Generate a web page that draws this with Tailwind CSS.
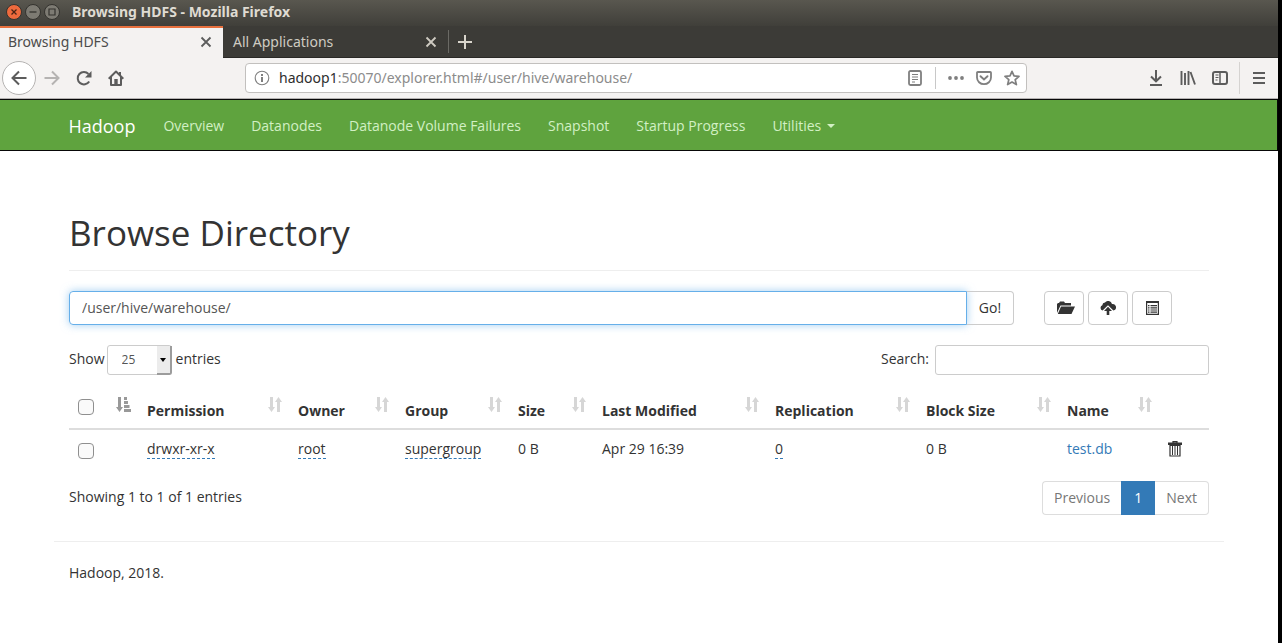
<!DOCTYPE html>
<html lang="en">

<head>
    <meta charset="UTF-8">
    <meta name="viewport" content="width=device-width, initial-scale=1.0">
    <title>Browsing HDFS</title>
    <script src="https://cdn.jsdelivr.net/npm/@tailwindcss/browser@4"></script>
</head>

<body class="min-h-screen bg-black pr-1 flex flex-col font-['Open_Sans','Noto_Sans',sans-serif] text-sm leading-5 text-[#333333]">
    <!-- shared icons -->
    <svg class="hidden">
        <symbol id="sort" viewBox="0 0 14 15">
            <path d="M2 0h3v10h2l-3.500 5L0 10h2zM9 15h3V5h2l-3.500-5L7 5h2z" fill="currentColor" />
        </symbol>
    </svg>

    <!-- window title -->
    <header class="h-[26px] pb-[2px] bg-gradient-to-b from-[#59574f] to-[#403f3a] flex items-center pl-[6px] text-[#dfdbd2]">
        <button aria-label="Close window" class="mr-[3px]"><svg class="size-4" viewBox="0 0 16 16"><circle cx="8" cy="8" r="7.500" fill="#ee6a3d" stroke="#34332f" /><path d="M5.500 5.500l5 5m0-5l-5 5" stroke="#4a2415" stroke-width="1.300" /></svg></button>
        <button aria-label="Minimize window" class="mr-[3px]"><svg class="size-4" viewBox="0 0 16 16"><circle cx="8" cy="8" r="7.500" fill="#7d7b73" stroke="#34332f" /><path d="M4.500 8h7" stroke="#34332f" stroke-width="1.300" /></svg></button>
        <button aria-label="Maximize window" class="mr-3"><svg class="size-4" viewBox="0 0 16 16"><circle cx="8" cy="8" r="7.500" fill="#7d7b73" stroke="#34332f" /><path d="M5 5h6v6H5z" fill="none" stroke="#34332f" stroke-width="1.200" /></svg></button>
        <span class="font-['Noto_Sans',sans-serif] text-sm font-bold">Browsing HDFS - Mozilla Firefox</span>
    </header>

    <!-- tabs -->
    <div class="h-8 bg-[#3c3b37] flex items-stretch border-b border-[#2a2926] font-['Noto_Sans',sans-serif] text-sm">
        <div class="w-[223px] -mb-px pb-[2px] bg-[#f4f2f1] border-t-2 border-[#e8703e] flex items-center justify-between pl-2 pr-[11px] text-[#4c4c4c]">
            <span>Browsing HDFS</span>
            <button aria-label="Close tab"><svg class="size-3" viewBox="0 0 12 12"><path d="M1.500 1.500l9 9m0-9l-9 9" stroke="#5c5c5c" stroke-width="1.800" /></svg></button>
        </div>
        <div class="w-[225px] flex items-center justify-between pl-[10px] pr-[11px] text-[#cfcbc2]">
            <span>All Applications</span>
            <button aria-label="Close tab"><svg class="size-3" viewBox="0 0 12 12"><path d="M1.500 1.500l9 9m0-9l-9 9" stroke="#cfcbc2" stroke-width="1.800" /></svg></button>
        </div>
        <div class="w-px my-1 bg-[#6b6a65]"></div>
        <button aria-label="New tab" class="ml-2"><svg class="size-4" viewBox="0 0 16 16"><path d="M8 1v14M1 8h14" stroke="#d9d5cc" stroke-width="2" /></svg></button>
    </div>

    <!-- toolbar -->
    <div class="h-10 bg-[#f4f2f1] flex items-center pl-[2px] pr-[11px] text-[#5c5c5c]">
        <button aria-label="Back" class="size-[34px] rounded-full bg-white border border-[#b5b3b2] flex items-center justify-center"><svg class="size-4" viewBox="0 0 16 16"><path d="M15.500 8H1.500M8 1.500L1.500 8L8 14.500" fill="none" stroke="currentColor" stroke-width="2" /></svg></button>
        <button aria-label="Forward" class="ml-2 text-[#b5b3b2]"><svg class="size-4" viewBox="0 0 16 16"><path d="M.5 8h14M8 1.500L14.500 8L8 14.500" fill="none" stroke="currentColor" stroke-width="2" /></svg></button>
        <button aria-label="Reload" class="ml-4"><svg class="size-4" viewBox="0 0 16 16"><path d="M13.200 11.500A6.200 6.200 0 1 1 12.500 4" fill="none" stroke="currentColor" stroke-width="2" /><path d="M15.500 1v6.500H9z" fill="currentColor" /></svg></button>
        <button aria-label="Home" class="ml-4"><svg class="size-4" viewBox="0 0 16 16"><path d="M.7 8.700L8 1.500l7.300 7.200M3 7v8h10V7" fill="none" stroke="currentColor" stroke-width="2" stroke-linejoin="round" /><path d="M6.300 9h3.400v6H6.300z" fill="currentColor" /><path d="M11 2h2v4h-2z" fill="currentColor" /></svg></button>

        <div class="ml-[121px] mr-[121px] flex-1 h-[30px] bg-white border border-[#c2c0be] rounded flex items-center pl-2 pr-[6px] text-[#7f7f7f]">
            <svg class="size-4 shrink-0" viewBox="0 0 16 16"><circle cx="8" cy="8" r="6.800" fill="none" stroke="currentColor" stroke-width="1.100" /><path d="M7 7h2v5H7zM7 4h2v2H7z" fill="currentColor" /></svg>
            <div class="ml-[9px] flex-1 font-['Noto_Sans',sans-serif] text-sm text-[#8c8c8c]"><span class="text-[#2e2e2e]">hadoop1</span>:50070/explorer.html#/user/hive/warehouse/</div>
            <button aria-label="Reader view"><svg class="size-4" viewBox="0 0 16 16"><rect x="2" y="1" width="12" height="14" rx="1.500" fill="none" stroke="currentColor" stroke-width="1.800" /><path d="M5 4.500h6M5 7h6M5 9.500h6M5 12h3" stroke="currentColor" /></svg></button>
            <div class="w-px h-[22px] bg-[#c8c8c8] ml-3 mr-3"></div>
            <button aria-label="Page actions"><svg class="size-4" viewBox="0 0 16 16"><circle cx="2" cy="8" r="1.900" fill="currentColor" /><circle cx="8" cy="8" r="1.900" fill="currentColor" /><circle cx="14" cy="8" r="1.900" fill="currentColor" /></svg></button>
            <button aria-label="Save to Pocket" class="ml-3"><svg class="size-4" viewBox="0 0 16 16"><path d="M1.800 2h12.400a.8.8 0 0 1 .8.8V7.500a7 6.700 0 0 1-14 0V2.800a.8.8 0 0 1 .8-.8z" fill="none" stroke="currentColor" stroke-width="1.800" /><path d="M4.500 6.200L8 9.500l3.500-3.300" fill="none" stroke="currentColor" stroke-width="1.900" stroke-linecap="round" /></svg></button>
            <button aria-label="Bookmark" class="ml-3"><svg class="size-4" viewBox="0 0 16 16"><path d="M8 1.300l2 4.600 5 .5-3.800 3.300 1.200 4.900L8 12l-4.400 2.600 1.200-4.900L1 6.400l5-.5z" fill="none" stroke="currentColor" stroke-width="1.700" stroke-linejoin="round" /></svg></button>
        </div>

        <button aria-label="Downloads"><svg class="size-4" viewBox="0 0 16 16"><path d="M8 0v11M3 6.500L8 11.300l5-4.800M2 15h12" fill="none" stroke="currentColor" stroke-width="2" /></svg></button>
        <button aria-label="Library" class="ml-4"><svg class="size-4" viewBox="0 0 16 16"><path d="M1.500 1v14M5 3v12M8.500 1v14M10.500 2l4.500 12.500" fill="none" stroke="currentColor" stroke-width="1.900" /></svg></button>
        <button aria-label="Sidebars" class="ml-4"><svg class="size-4" viewBox="0 0 16 16"><rect x="1" y="2" width="14" height="12" rx="2" fill="none" stroke="currentColor" stroke-width="2" /><path d="M8 2v12" stroke="currentColor" stroke-width="1.500" /><path d="M3.500 5h3M3.500 7.500h3M3.500 10h2" stroke="currentColor" /></svg></button>
        <div class="w-px h-8 bg-[#d5d3d1] ml-[11px] mr-[11px]"></div>
        <button aria-label="Menu"><svg class="size-4" viewBox="0 0 16 16"><path d="M2 3h12M2 8h12M2 13h12" stroke="currentColor" stroke-width="2" /></svg></button>
    </div>

    <!-- page -->
    <div class="flex-1 bg-white border-t border-[#b5b3b2]">
        <nav class="h-[52px] bg-[#5fa33e] border border-l-0 border-[#080808]">
            <div class="max-w-[1170px] mx-auto px-[15px] pt-[2px] h-full flex items-center text-[#d2f0c4]">
                <a href="#" class="text-lg text-white mr-7">Hadoop</a>
                <div class="flex gap-[27px]">
                    <a href="#">Overview</a>
                    <a href="#">Datanodes</a>
                    <a href="#">Datanode Volume Failures</a>
                    <a href="#">Snapshot</a>
                    <a href="#">Startup Progress</a>
                    <a href="#" class="flex items-center">Utilities <span class="ml-[6px] border-x-4 border-t-4 border-x-transparent border-t-[#d2f0c4]"></span></a>
                </div>
            </div>
        </nav>

        <main class="max-w-[1170px] mx-auto px-[15px] pt-[62px]">
            <h1 class="text-[35px] leading-10 pb-[17px] border-b border-[#eeeeee]">Browse Directory</h1>

            <form class="flex mt-5" onsubmit="event.preventDefault()">
                <input type="text" aria-label="Directory" value="/user/hive/warehouse/"
                    class="flex-1 h-[34px] px-3 pb-[2px] border border-[#66afe9] rounded-l text-[#555555] outline-none shadow-[0_0_8px_rgba(102,175,233,0.6)]">
                <button type="submit" class="w-12 -ml-px h-[34px] border border-[#cccccc] border-l-[#66afe9] rounded-r">Go!</button>
                <div class="flex gap-1 ml-[30px] mr-[37px]">
                    <button type="button" aria-label="Create directory" class="w-10 h-[34px] border border-[#cccccc] rounded flex items-center justify-center"><svg class="w-[18px] h-[14px] ml-1" viewBox="0 0 18 14"><path d="M0 12V3l1-1h1l1-1.500h4L8 2h6v2.500H3.500zM4 5.500h14L14.500 13H.8z" fill="#333333" /></svg></button>
                    <button type="button" aria-label="Upload files" class="w-10 h-[34px] border border-[#cccccc] rounded flex items-center justify-center"><svg class="w-4 h-[14px]" viewBox="0 0 16 14"><path d="M2.600 9.500A2.800 2.800 0 0 1 2.300 4.200A3 3 0 0 1 5 1.500A4 4 0 0 1 12 3A3.300 3.300 0 0 1 13.400 9.500L8 4.300z" fill="#333333" /><path d="M8 5.700l4 4.300H9.300V14H6.700v-4H4z" fill="#333333" /></svg></button>
                    <button type="button" aria-label="Cut and paste" class="w-10 h-[34px] border border-[#cccccc] rounded flex items-center justify-center"><svg class="w-[13px] h-[14px]" viewBox="0 0 13 14"><path d="M.6 .6h11.800v12.800H.6z" fill="none" stroke="#333333" stroke-width="1.200" /><path d="M0 0h13v2H0zM2 4h1.500v1.200H2zM4.500 4H11v1.200H4.500zM2 6.200h1.500v1.200H2zM4.500 6.200H11v1.200H4.500zM2 8.400h1.500v1.200H2zM4.500 8.400H11v1.200H4.500zM2 10.600h1.500v1.200H2zM4.500 10.600H11v1.200H4.500z" fill="#333333" /></svg></button>
                </div>
            </form>

            <div class="flex justify-between mt-5">
                <label class="flex items-center gap-[2px]">
                    <span class="-mt-[2px]">Show</span>
                    <span class="relative flex mr-[2px]">
                        <select class="appearance-none w-[65px] h-[30px] pl-[14px] border border-[#cccccc] rounded-[3px] text-xs text-[#555555]">
                            <option>25</option>
                        </select>
                        <span class="absolute right-0 top-px bottom-0 w-[15px] bg-[#ececec] border-r-2 border-b-2 border-[#9c9c9c] rounded-br-[3px] flex items-center justify-center pointer-events-none"><span class="border-x-[3px] border-t-4 border-x-transparent border-t-black"></span></span>
                    </span>
                    <span class="-mt-[2px]">entries</span>
                </label>
                <label class="flex items-center gap-[6px]">
                    <span class="-mt-[2px]">Search:</span>
                    <input type="search" class="w-[274px] h-[30px] px-2 border border-[#cccccc] rounded-[3px]">
                </label>
            </div>

            <table class="w-full table-fixed mt-[6px] text-left">
                <colgroup>
                    <col class="w-[70px]">
                    <col class="w-[151px]">
                    <col class="w-[107px]">
                    <col class="w-[113px]">
                    <col class="w-[84px]">
                    <col class="w-[173px]">
                    <col class="w-[151px]">
                    <col class="w-[141px]">
                    <col class="w-[101px]">
                    <col class="w-[49px]">
                </colgroup>
                <thead>
                    <tr class="h-12 align-top border-b-2 border-[#dddddd]">
                        <th class="pl-[9px] pr-2 pt-4">
                            <div class="flex items-start justify-between">
                                <input type="checkbox" aria-label="Select all" class="appearance-none size-4 mt-[2px] bg-[#fafafa] border border-[#8f8f8f] rounded">
                                <svg class="w-[15px] h-[15px] text-[#999999]" viewBox="0 0 15 15"><path d="M2 0h3v10h2l-3.500 5L0 10h2zM8 0h3v3H8zM8 4h4v3H8zM8 8h5.500v3H8zM8 12h7v3H8z" fill="currentColor" /></svg>
                            </div>
                        </th>
                        <th class="px-2 pt-4"><div class="flex items-start justify-between"><span class="mt-1">Permission</span><svg class="w-[14px] h-[15px] text-[#d6d6d6]"><use href="#sort" /></svg></div></th>
                        <th class="px-2 pt-4"><div class="flex items-start justify-between"><span class="mt-1">Owner</span><svg class="w-[14px] h-[15px] text-[#d6d6d6]"><use href="#sort" /></svg></div></th>
                        <th class="px-2 pt-4"><div class="flex items-start justify-between"><span class="mt-1">Group</span><svg class="w-[14px] h-[15px] text-[#d6d6d6]"><use href="#sort" /></svg></div></th>
                        <th class="px-2 pt-4"><div class="flex items-start justify-between"><span class="mt-1">Size</span><svg class="w-[14px] h-[15px] text-[#d6d6d6]"><use href="#sort" /></svg></div></th>
                        <th class="px-2 pt-4"><div class="flex items-start justify-between"><span class="mt-1">Last Modified</span><svg class="w-[14px] h-[15px] text-[#d6d6d6]"><use href="#sort" /></svg></div></th>
                        <th class="px-2 pt-4"><div class="flex items-start justify-between"><span class="mt-1">Replication</span><svg class="w-[14px] h-[15px] text-[#d6d6d6]"><use href="#sort" /></svg></div></th>
                        <th class="px-2 pt-4"><div class="flex items-start justify-between"><span class="mt-1">Block Size</span><svg class="w-[14px] h-[15px] text-[#d6d6d6]"><use href="#sort" /></svg></div></th>
                        <th class="px-2 pt-4"><div class="flex items-start justify-between"><span class="mt-1">Name</span><svg class="w-[14px] h-[15px] text-[#d6d6d6]"><use href="#sort" /></svg></div></th>
                        <th></th>
                    </tr>
                </thead>
                <tbody>
                    <tr class="h-[38px]">
                        <td class="pl-[9px] pr-2"><input type="checkbox" aria-label="Select test.db" class="appearance-none block size-4 mt-1 bg-[#fafafa] border border-[#8f8f8f] rounded"></td>
                        <td class="px-2"><span class="border-b border-dashed border-[#337ab7]">drwxr-xr-x</span></td>
                        <td class="px-2"><span class="border-b border-dashed border-[#337ab7]">root</span></td>
                        <td class="px-2"><span class="border-b border-dashed border-[#337ab7]">supergroup</span></td>
                        <td class="px-2">0 B</td>
                        <td class="px-2">Apr 29 16:39</td>
                        <td class="px-2"><span class="border-b border-dashed border-[#337ab7]">0</span></td>
                        <td class="px-2">0 B</td>
                        <td class="px-2"><a href="#" class="text-[#337ab7]">test.db</a></td>
                        <td class="px-2"><button aria-label="Delete" class="block"><svg class="w-[14px] h-4" viewBox="0 0 14 16"><path d="M5 2V.6h4V2M.5 3.300V2.200h13v1.100zM2 4.500h10V15H2z" fill="none" stroke="#333333" stroke-width="1.200" /><path d="M4.500 5v9M7 5v9M9.500 5v9" stroke="#333333" /></svg></button></td>
                    </tr>
                </tbody>
            </table>

            <div class="flex justify-between mt-[14px]">
                <div class="mt-[6px]">Showing 1 to 1 of 1 entries</div>
                <div class="flex h-[34px] text-[#777777]">
                    <button class="px-[11px] border border-r-0 border-[#dddddd] rounded-l">Previous</button>
                    <button class="px-3 border border-[#337ab7] bg-[#337ab7] text-white">1</button>
                    <button class="px-[11px] border border-l-0 border-[#dddddd] rounded-r">Next</button>
                </div>
            </div>
        </main>

        <footer class="max-w-[1170px] mx-auto mt-[26px] px-[15px] pt-[21px] pb-5 border-t border-[#eeeeee]">Hadoop, 2018.</footer>
    </div>
</body>

</html>
